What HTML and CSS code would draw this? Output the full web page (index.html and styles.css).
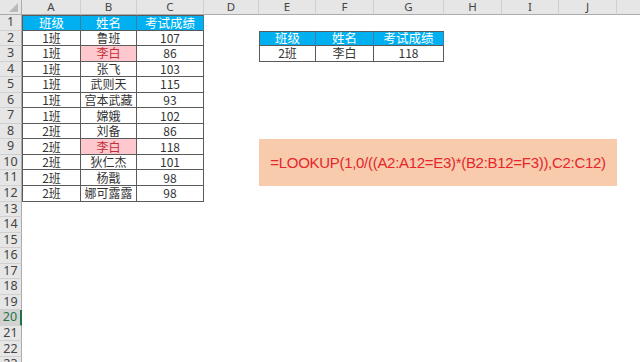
FILE: index.html
```html
<!DOCTYPE html>
<html lang="zh">
<head>
<meta charset="utf-8">
<title>LOOKUP</title>
<link rel="stylesheet" href="styles.css">
</head>
<body>
<div class="sheet">
  <div class="ch corner"><span class="tri"></span></div>
  <div class="ch">A</div><div class="ch">B</div><div class="ch">C</div><div class="ch">D</div>
  <div class="ch">E</div><div class="ch">F</div><div class="ch">G</div><div class="ch">H</div>
  <div class="ch">I</div><div class="ch">J</div><div class="ch last"></div>

  <div class="formula">=LOOKUP(1,0/((A2:A12=E3)*(B2:B12=F3)),C2:C12)</div>

  <div class="rh">1</div>
  <div class="t hd ca first top">班级</div><div class="t hd cb top">姓名</div><div class="t hd cc top">考试成绩</div>

  <div class="rh">2</div>
  <div class="t ca first">1班</div><div class="t cb">鲁班</div><div class="t cc">107</div>
  <div class="t hd ce first top">班级</div><div class="t hd cf top">姓名</div><div class="t hd cg top">考试成绩</div>

  <div class="rh">3</div>
  <div class="t ca first">1班</div><div class="t cb bad">李白</div><div class="t cc">86</div>
  <div class="t ce first">2班</div><div class="t cf">李白</div><div class="t cg">118</div>

  <div class="rh">4</div>
  <div class="t ca first">1班</div><div class="t cb">张飞</div><div class="t cc">103</div>
  <div class="rh">5</div>
  <div class="t ca first">1班</div><div class="t cb">武则天</div><div class="t cc">115</div>
  <div class="rh">6</div>
  <div class="t ca first">1班</div><div class="t cb">宫本武藏</div><div class="t cc">93</div>
  <div class="rh">7</div>
  <div class="t ca first">1班</div><div class="t cb">嫦娥</div><div class="t cc">102</div>
  <div class="rh">8</div>
  <div class="t ca first">2班</div><div class="t cb">刘备</div><div class="t cc">86</div>
  <div class="rh">9</div>
  <div class="t ca first">2班</div><div class="t cb bad">李白</div><div class="t cc">118</div>
  <div class="rh">10</div>
  <div class="t ca first">2班</div><div class="t cb">狄仁杰</div><div class="t cc">101</div>
  <div class="rh">11</div>
  <div class="t ca first">2班</div><div class="t cb">杨戬</div><div class="t cc">98</div>
  <div class="rh">12</div>
  <div class="t ca first">2班</div><div class="t cb">娜可露露</div><div class="t cc">98</div>

  <div class="rh">13</div>
  <div class="rh">14</div>
  <div class="rh">15</div>
  <div class="rh">16</div>
  <div class="rh">17</div>
  <div class="rh">18</div>
  <div class="rh">19</div>
  <div class="rh sel">20</div>
  <div class="rh">21</div>
  <div class="rh">22</div>
  <div class="rh">23</div>
</div>
</body>
</html>
```
FILE: styles.css
```css
html, body {
  margin: 0;
  padding: 0;
  background: #ffffff;
  overflow: hidden;
}

.sheet {
  width: 640px;
  height: 362px;
  overflow: hidden;
  display: grid;
  grid-template-columns: 22px 59px 56px 67px 55px 57px 58px 70px 58px 57px 58px 1fr;
  grid-template-rows: 15px repeat(23, 15.56px);
  font-family: "Noto Sans CJK SC", "Noto Sans", sans-serif;
}

.ch {
  grid-row: 1;
  background: #e6e6e6;
  border-right: 1px solid #cfcfcf;
  border-bottom: 1px solid #ababab;
  box-sizing: border-box;
  display: flex;
  align-items: center;
  justify-content: center;
  font-family: "Noto Sans", sans-serif;
  font-size: 11.5px;
  color: #444;
  line-height: 1;
}
.ch.last { border-right: none; }

.corner {
  position: relative;
  border-right: 1px solid #ababab;
}
.tri {
  position: absolute;
  right: 3px;
  bottom: 2px;
  width: 0;
  height: 0;
  border-left: 9px solid transparent;
  border-bottom: 9px solid #b9b9b9;
}

.rh {
  grid-column: 1;
  background: #e6e6e6;
  border-right: 1px solid #ababab;
  border-bottom: 1px solid #d0d0d0;
  box-sizing: border-box;
  display: flex;
  align-items: center;
  justify-content: center;
  font-family: "Noto Sans", sans-serif;
  font-size: 12.5px;
  color: #444;
  line-height: 1;
}
.rh.sel {
  background: #d2d2d2;
  color: #217346;
  border-right: 2px solid #217346;
}

.t {
  box-sizing: border-box;
  border-right: 1px solid #5a5a5a;
  border-bottom: 1px solid #5a5a5a;
  display: flex;
  align-items: center;
  justify-content: center;
  font-size: 12px;
  color: #333;
  line-height: 1;
  white-space: nowrap;
}
.t.first { border-left: 1px solid #5a5a5a; }
.t.top { border-top: 1px solid #5a5a5a; }
.t.hd {
  background: #00b0f0;
  color: #ffffff;
  font-size: 12.5px;
  border-right-color: #3a7fa8;
}

.ca { grid-column: 2; }
.cb { grid-column: 3; }
.cc { grid-column: 4; }
.ce { grid-column: 6; }
.cf { grid-column: 7; }
.cg { grid-column: 8; }

.t.bad {
  background: #ffc7ce;
  color: #c0303a;
}

.formula {
  grid-column: 6 / 12;
  grid-row: 10 / 13;
  background: #f8cbad;
  color: #e5262b;
  display: flex;
  align-items: center;
  justify-content: center;
  font-family: "Liberation Sans", Arial, sans-serif;
  font-size: 15px;
  letter-spacing: -0.3px;
  white-space: nowrap;
}
```
